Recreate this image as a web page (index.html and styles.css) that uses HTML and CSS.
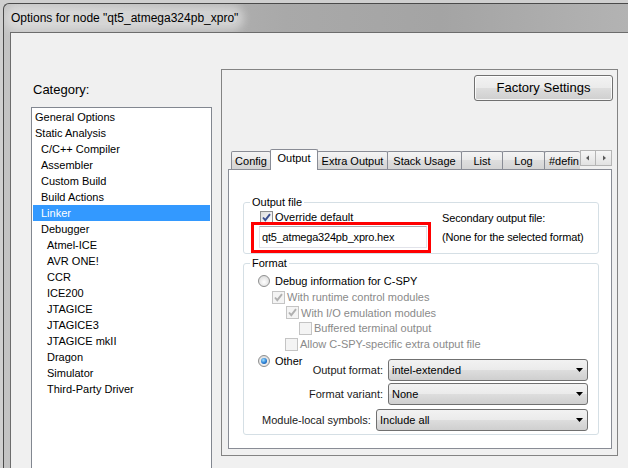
FILE: index.html
```html
<!DOCTYPE html>
<html>
<head>
<meta charset="utf-8">
<link rel="stylesheet" href="styles.css">
</head>
<body>
<div class="window">
  <div class="titlebar"><span class="title">Options for node "qt5_atmega324pb_xpro"</span></div>
  <div class="frame">
    <div class="client">
      <div class="catcol">
        <div class="catlabel">Category:</div>
        <ul class="catlist">
          <li class="l0">General Options</li>
          <li class="l0">Static Analysis</li>
          <li class="l1">C/C++ Compiler</li>
          <li class="l1">Assembler</li>
          <li class="l1">Custom Build</li>
          <li class="l1">Build Actions</li>
          <li class="l1 sel">Linker</li>
          <li class="l1">Debugger</li>
          <li class="l2">Atmel-ICE</li>
          <li class="l2">AVR ONE!</li>
          <li class="l2">CCR</li>
          <li class="l2">ICE200</li>
          <li class="l2">JTAGICE</li>
          <li class="l2">JTAGICE3</li>
          <li class="l2">JTAGICE mkII</li>
          <li class="l2">Dragon</li>
          <li class="l2">Simulator</li>
          <li class="l2">Third-Party Driver</li>
        </ul>
      </div>
      <div class="optframe">
        <div class="btnrow"><div class="btn">Factory Settings</div></div>
        <div class="tabstrip">
          <div class="tab w-config">Config</div>
          <div class="tab active w-output">Output</div>
          <div class="tab w-extra">Extra Output</div>
          <div class="tab w-stack">Stack Usage</div>
          <div class="tab w-list">List</div>
          <div class="tab w-log">Log</div>
          <div class="tab clip w-def">#defin</div>
          <div class="scroller">
            <span class="arr"><svg width="14" height="14" viewBox="0 0 14 14"><path d="M8 4.5 L5 7 L8 9.5 Z" fill="#5a5a5a"/></svg></span>
            <span class="arr"><svg width="14" height="14" viewBox="0 0 14 14"><path d="M6 4.5 L9 7 L6 9.5 Z" fill="#5a5a5a"/></svg></span>
          </div>
        </div>
        <div class="panel">
          <fieldset class="group g-out">
            <legend>Output file</legend>
            <div class="outgrid">
              <div class="outleft">
                <div class="chkrow"><span class="cb"><svg width="11" height="11" viewBox="0 0 11 11"><path d="M2 5.5 L4.3 8.2 L9 2.2" fill="none" stroke="#3b4f8f" stroke-width="1.9"/></svg></span>Override default</div>
                <div class="inputwrap">
                  <div class="textbox">qt5_atmega324pb_xpro.hex</div>
                  <div class="redbox"></div>
                </div>
              </div>
              <div class="outright">
                <div>Secondary output file:</div>
                <div>(None for the selected format)</div>
              </div>
            </div>
          </fieldset>
          <fieldset class="group g-fmt">
            <legend>Format</legend>
            <div class="fmtbody">
              <div class="row r1"><span class="radio"></span>Debug information for C-SPY</div>
              <div class="row r2 dis"><span class="cb off"><svg width="11" height="11" viewBox="0 0 11 11"><path d="M2 5.5 L4.3 8.2 L9 2.2" fill="none" stroke="#b0b0b0" stroke-width="1.9"/></svg></span>With runtime control modules</div>
              <div class="row r3 dis"><span class="cb off"><svg width="11" height="11" viewBox="0 0 11 11"><path d="M2 5.5 L4.3 8.2 L9 2.2" fill="none" stroke="#b0b0b0" stroke-width="1.9"/></svg></span>With I/O emulation modules</div>
              <div class="row r4 dis"><span class="cb off"></span>Buffered terminal output</div>
              <div class="row r5 dis"><span class="cb off"></span>Allow C-SPY-specific extra output file</div>
              <div class="otherblock">
                <div class="otheropt"><span class="radio on"></span>Other</div>
                <div class="selgrid">
                  <div class="lbl">Output format:</div>
                  <div class="combo"><span>intel-extended</span><svg width="7" height="4" viewBox="0 0 7 4"><path d="M0 0 H7 L3.5 4 Z" fill="#000"/></svg></div>
                  <div class="lbl">Format variant:</div>
                  <div class="combo"><span>None</span><svg width="7" height="4" viewBox="0 0 7 4"><path d="M0 0 H7 L3.5 4 Z" fill="#000"/></svg></div>
                </div>
              </div>
              <div class="modrow">
                <div class="modlbl">Module-local symbols:</div>
                <div class="combo wide"><span>Include all</span><svg width="7" height="4" viewBox="0 0 7 4"><path d="M0 0 H7 L3.5 4 Z" fill="#000"/></svg></div>
              </div>
            </div>
          </fieldset>
        </div>
      </div>
    </div>
  </div>
</div>
</body>
</html>
```

FILE: styles.css
```css
html, body {
  margin: 0;
  padding: 0;
  width: 628px;
  height: 468px;
  overflow: hidden;
}

body {
  background: #cfcfcf;
  font-family: "Liberation Sans", Arial, sans-serif;
  font-size: 11px;
  color: #000;
}

.window {
  margin: 3px 0 0 3px;
  height: 465px;
  border-top: 1px solid #4a4a4a;
  border-left: 1px solid #4a4a4a;
  border-top-left-radius: 6px;
  background: linear-gradient(to right, #c3c3c3, #a9a9a9 45%, #a4a4a4 70%, #b3b3b3);
  display: flex;
  flex-direction: column;
  overflow: hidden;
}

.titlebar {
  height: 28px;
  flex: none;
  display: flex;
  align-items: center;
  padding-left: 7px;
}

.title {
  font-size: 12px;
  color: #000;
  background: rgba(232, 232, 232, 0.6);
  box-shadow: 0 0 8px 6px rgba(232, 232, 232, 0.6);
  border-radius: 8px;
  line-height: 14px;
}

.frame {
  flex: 1;
  display: flex;
  padding-left: 6px;
}

.client {
  flex: 1;
  background: #f0f0f0;
  border-top: 1px solid #6c6c6c;
  border-left: 1px solid #6c6c6c;
  display: flex;
  align-items: flex-start;
  padding-left: 20px;
}

/* category column */
.catcol {
  width: 181px;
  flex: none;
  margin-top: 49px;
}

.catlabel {
  font-size: 13px;
  line-height: 16px;
  height: 25px;
  padding-left: 2px;
}

.catlist {
  list-style: none;
  margin: 0;
  padding: 1px;
  height: 400px;
  border: 1px solid #828790;
  background: #fff;
  box-sizing: border-box;
}

.catlist li {
  height: 16px;
  line-height: 16px;
  white-space: nowrap;
}

.catlist .l0 { padding-left: 2px; }
.catlist .l1 { padding-left: 8px; }
.catlist .l2 { padding-left: 14px; }

.catlist .sel {
  background: #3399ff;
  color: #fff;
}

/* options frame */
.optframe {
  flex: none;
  width: 397px;
  height: 387px;
  margin: 36px 0 0 9px;
  border: 1px solid #838383;
  box-sizing: border-box;
}

.btnrow {
  display: flex;
  justify-content: flex-end;
  padding: 5px 4px 0 0;
}

.btn {
  width: 139px;
  height: 26px;
  box-sizing: border-box;
  border: 1px solid #707070;
  border-radius: 3px;
  background: linear-gradient(#f2f2f2, #ebebeb 48%, #dddddd 52%, #cfcfcf);
  box-shadow: inset 0 0 0 1px rgba(255, 255, 255, 0.8);
  font-size: 13px;
  line-height: 24px;
  text-align: center;
}

/* tabs */
.tabstrip {
  position: relative;
  z-index: 1;
  margin: 48px 0 0 6px;
  padding-left: 3px;
  height: 20px;
  display: flex;
  align-items: flex-end;
}

.tab {
  height: 18px;
  box-sizing: border-box;
  border: 1px solid #898c95;
  border-bottom: none;
  margin-left: -1px;
  background: linear-gradient(#f4f4f4, #ebebeb 45%, #dedede 50%, #d4d4d4);
  line-height: 18px;
  text-align: center;
  white-space: nowrap;
  border-radius: 2px 2px 0 0;
}

.tab:first-child { margin-left: 0; }

.tab.active {
  height: 21px;
  margin-bottom: -1px;
  background: #fff;
  line-height: 17px;
}

.w-config { width: 40px; }
.w-output { width: 48px; }
.w-extra { width: 71px; }
.w-stack { width: 75px; }
.w-list { width: 42px; }
.w-log { width: 43px; }
.w-def { width: 36px; }

.tab.clip {
  overflow: hidden;
  text-align: left;
  padding-left: 4px;
  border-right: none;
}

.scroller {
  align-self: flex-start;
  margin-top: 1px;
  display: flex;
}

.arr {
  width: 16px;
  height: 16px;
  box-sizing: border-box;
  border: 1px solid #b5b5b5;
  background: linear-gradient(#f6f6f6, #e2e2e2);
  display: flex;
  align-items: center;
  justify-content: center;
}

.arr + .arr { border-left: none; }

/* tab page */
.panel {
  margin-left: 6px;
  width: 384px;
  height: 280px;
  box-sizing: border-box;
  border: 1px solid #898c95;
  background: #fff;
}

.group {
  border: 1px solid #d5dfe5;
  border-radius: 3px;
  padding: 0;
  min-width: 0;
}

.group legend {
  font-size: 11px;
  line-height: 14px;
  padding: 0 2px;
  margin-left: 6px;
}

.g-out {
  margin: 25px 12px 0 14px;
}

.outgrid {
  display: flex;
  padding: 0 0 5px 15px;
}

.outleft {
  width: 168px;
  flex: none;
}

.chkrow {
  margin-top: 1px;
  height: 14px;
  line-height: 14px;
  display: flex;
  align-items: center;
  padding-left: 1px;
}

.cb {
  width: 13px;
  height: 13px;
  box-sizing: border-box;
  border: 1px solid #8e8f8f;
  background: linear-gradient(135deg, #dcdcdc, #ffffff);
  margin-right: 2px;
  flex: none;
  display: flex;
  align-items: center;
  justify-content: center;
}

.cb.off {
  border-color: #c4c4c4;
  background: #f4f4f4;
}

.inputwrap {
  position: relative;
  margin-top: 2px;
}

.textbox {
  width: 168px;
  height: 22px;
  box-sizing: border-box;
  border: 1px solid #e2e3ea;
  border-top-color: #abadb3;
  padding-left: 2px;
  line-height: 20px;
  white-space: nowrap;
  letter-spacing: -0.2px;
}

.redbox {
  position: absolute;
  left: -8px;
  top: -4px;
  width: 180px;
  height: 31px;
  box-sizing: border-box;
  border: 3px solid #f00;
}

.outright {
  margin-left: 15px;
  line-height: 19px;
  white-space: nowrap;
  letter-spacing: -0.15px;
}

/* format group */
.g-fmt {
  margin: 2px 12px 0 14px;
}

.fmtbody {
  padding: 3px 10px 3px 14px;
}

.row {
  display: flex;
  align-items: center;
  height: 16px;
  white-space: nowrap;
}

.r3 { height: 15px; padding-left: 28px; }
.r2 { padding-left: 14px; }
.r4 { padding-left: 41px; }
.r5 { padding-left: 27px; }

.dis { color: #8a8a8a; }

.radio {
  width: 12px;
  height: 12px;
  box-sizing: border-box;
  border-radius: 50%;
  border: 1px solid #8e8f8f;
  background: radial-gradient(circle at 50% 60%, #ffffff, #e0e0e0 70%, #cfcfcf);
  margin-right: 5px;
  flex: none;
  position: relative;
}

.radio.on::after {
  content: "";
  position: absolute;
  left: 2px;
  top: 2px;
  width: 6px;
  height: 6px;
  border-radius: 50%;
  background: radial-gradient(circle at 40% 35%, #9fe0ff, #2a7fd4 55%, #0c3f86);
}

.otherblock {
  margin-top: 2px;
  display: flex;
  align-items: flex-start;
}

.otheropt {
  display: flex;
  align-items: center;
  height: 14px;
  line-height: 14px;
}

.selgrid {
  margin-left: auto;
  margin-top: 5px;
  display: grid;
  grid-template-columns: 80px 200px;
  column-gap: 5px;
  row-gap: 2px;
}

.lbl {
  text-align: right;
  line-height: 22px;
  white-space: nowrap;
  color: #1a1a1a;
}

.combo {
  height: 22px;
  box-sizing: border-box;
  border: 1px solid #707070;
  border-radius: 3px;
  background: linear-gradient(#f2f2f2, #ebebeb 48%, #dddddd 52%, #cfcfcf);
  display: flex;
  align-items: center;
  justify-content: space-between;
  padding: 0 4px 0 3px;
  white-space: nowrap;
}

.combo.wide {
  width: 212px;
  margin-left: auto;
}

.modrow {
  margin-top: 4px;
  display: flex;
  align-items: center;
}

.modlbl {
  padding-left: 4px;
  white-space: nowrap;
  color: #1a1a1a;
}
```
